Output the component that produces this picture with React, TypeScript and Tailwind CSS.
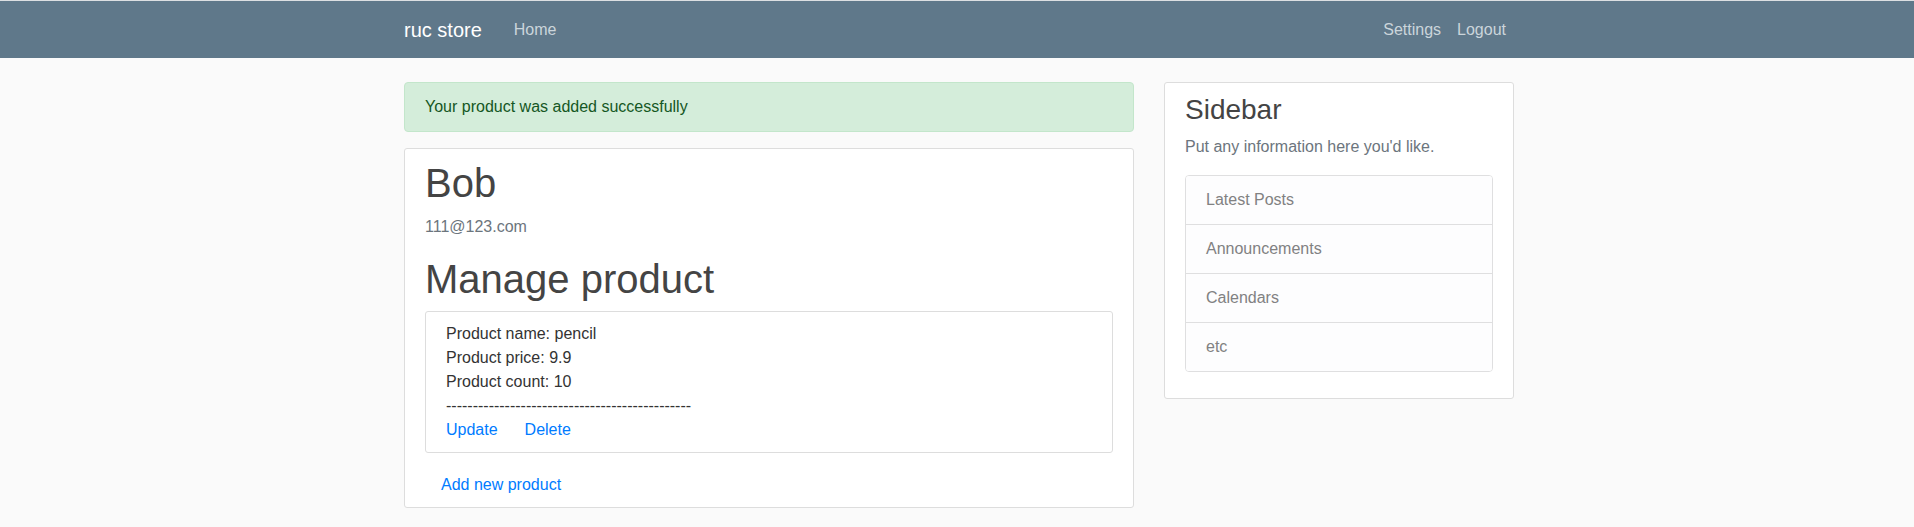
import { FC } from "react";

type IProduct = {
  name: string;
  price: number;
  count: number;
};

const products: IProduct[] = [{ name: "pencil", price: 9.9, count: 10 }];

const sidebarLinks = ["Latest Posts", "Announcements", "Calendars", "etc"];

const Navbar: FC = () => (
  <header className="border-t border-[#dcdfe2]">
    <nav className="bg-[#5f788a] h-[57px]">
      <div className="w-[1140px] mx-auto pl-[17px] pr-[13px] h-full flex items-center">
        <a className="text-white text-[20px] leading-[30px] mr-6 py-[5px]">
          ruc store
        </a>
        <a className="text-[#cbd5db] text-base leading-6 px-2 py-2">Home</a>
        <div className="ml-auto flex">
          <a className="text-[#cbd5db] text-base leading-6 px-2 py-2">
            Settings
          </a>
          <a className="text-[#cbd5db] text-base leading-6 px-2 py-2">
            Logout
          </a>
        </div>
      </div>
    </nav>
  </header>
);

const ProductItem: FC<{ product: IProduct }> = ({ product }) => (
  <div className="bg-white border border-[#dddddd] rounded-[3px] px-5 py-[10px] mb-5 text-[#333333] leading-6">
    <p>Product name: {product.name}</p>
    <p>Product price: {product.price}</p>
    <p>Product count: {product.count}</p>
    <p>----------------------------------------------</p>
    <p>
      <a className="text-[#007bff]">Update</a>
      <a className="text-[#007bff] ml-[27px]">Delete</a>
    </p>
  </div>
);

const App: FC = () => {
  return (
    <div
      className="min-h-screen bg-[#fafafa] text-[#333333] text-base"
      style={{ fontFamily: '"Liberation Sans", Arial, sans-serif' }}
    >
      <Navbar />
      <main className="w-[1140px] mx-auto pl-[17px] pr-[13px] pt-[24px]">
        <div className="flex -mx-[15px]">
          <div className="w-[760px] px-[15px]">
            <div className="bg-[#d4edda] border border-[#c3e6cb] text-[#155724] rounded px-5 py-3 leading-6 mb-4">
              Your product was added successfully
            </div>
            <div className="bg-white border border-[#dddddd] rounded-[3px] px-5 py-[10px] mb-5">
              <h1 className="text-[40px] leading-[48px] text-[#444444] mb-2">
                Bob
              </h1>
              <p className="text-[#6c757d] leading-6 mb-4">111@123.com</p>
              <h1 className="text-[40px] leading-[48px] text-[#444444] mb-2">
                Manage product
              </h1>
              {products.map((p) => (
                <ProductItem key={p.name} product={p} />
              ))}
              <p className="leading-6">
                <a className="text-[#007bff] ml-4">Add new product</a>
              </p>
            </div>
          </div>
          <div className="w-[380px] px-[15px]">
            <div className="bg-white border border-[#dddddd] rounded-[3px] px-5 py-[10px] mb-5">
              <h3 className="text-[28px] leading-[34px] text-[#444444] mb-2">
                Sidebar
              </h3>
              <p className="text-[#6c757d] leading-6 mb-4">
                Put any information here you'd like.
              </p>
              <ul className="flex flex-col mb-4 rounded border border-[#dfdfe0] overflow-hidden">
                {sidebarLinks.map((link, i) => (
                  <li
                    key={link}
                    className={`bg-[#fdfdfe] text-[#818182] px-5 py-3 leading-6 ${
                      i > 0 ? "border-t border-[#dfdfe0]" : ""
                    }`}
                  >
                    {link}
                  </li>
                ))}
              </ul>
            </div>
          </div>
        </div>
      </main>
    </div>
  );
};

export default App;
